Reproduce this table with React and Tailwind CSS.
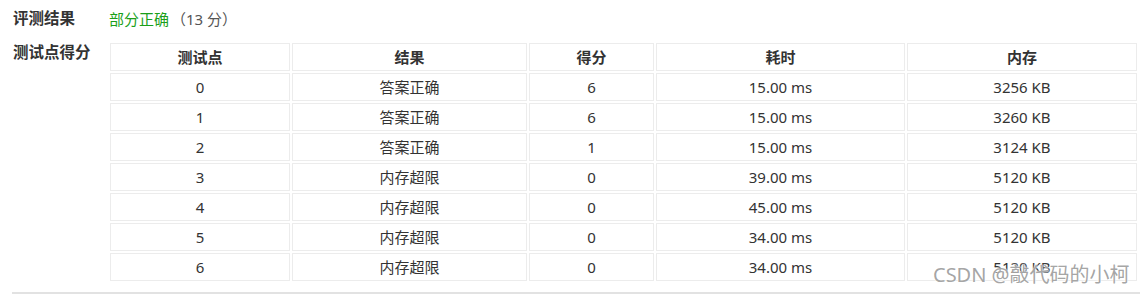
const ROWS = [
  { id: 0, result: '答案正确', score: 6, time: '15.00 ms', mem: '3256 KB' },
  { id: 1, result: '答案正确', score: 6, time: '15.00 ms', mem: '3260 KB' },
  { id: 2, result: '答案正确', score: 1, time: '15.00 ms', mem: '3124 KB' },
  { id: 3, result: '内存超限', score: 0, time: '39.00 ms', mem: '5120 KB' },
  { id: 4, result: '内存超限', score: 0, time: '45.00 ms', mem: '5120 KB' },
  { id: 5, result: '内存超限', score: 0, time: '34.00 ms', mem: '5120 KB' },
  { id: 6, result: '内存超限', score: 0, time: '34.00 ms', mem: '5120 KB' },
]

const COLS = [
  { key: 'id', title: '测试点', w: 'w-[180px]' },
  { key: 'result', title: '结果', w: 'w-[235px]' },
  { key: 'score', title: '得分', w: 'w-[125px]' },
  { key: 'time', title: '耗时', w: 'w-[249px]' },
  { key: 'mem', title: '内存', w: 'w-[230px]' },
]

const FONT = { fontFamily: '"Noto Sans", "Noto Sans CJK SC", sans-serif' }

export default function App() {
  return (
    <div className="relative w-[1140px] h-[294px] bg-white text-[#333] text-[15px] overflow-hidden" style={FONT}>
      <div className="flex items-center h-[38px] pl-[13px]">
        <span className="w-[96px] font-bold text-[15.5px]">评测结果</span>
        <span className="text-[#1a9f1a]">部分正确</span>
        <span className="text-[#555] ml-[2px]">（13 分）</span>
      </div>
      <div className="flex items-start pl-[13px]">
        <span className="w-[95px] font-bold text-[15.5px] mt-[4px] leading-[20px]">测试点得分</span>
        <table className="border-separate border-spacing-[2px] mt-[3px] table-fixed">
          <thead>
            <tr>
              {COLS.map((c) => (
                <th key={c.key} className={`${c.w} h-[28px] p-0 border border-[#ececec] font-bold text-center leading-[26px]`}>
                  {c.title}
                </th>
              ))}
            </tr>
          </thead>
          <tbody>
            {ROWS.map((r) => (
              <tr key={r.id}>
                {COLS.map((c) => (
                  <td key={c.key} className="h-[28px] p-0 border border-[#ececec] text-center leading-[26px]">
                    {r[c.key]}
                  </td>
                ))}
              </tr>
            ))}
          </tbody>
        </table>
      </div>
      <div className="absolute left-[12px] right-0 top-[292px] border-t-2 border-[#e2e2e2]" />
      <div
        className="absolute left-[933px] top-[261px] text-[20px] leading-[28px] text-[#9a9a9a]/90 whitespace-nowrap"
        style={{ ...FONT, textShadow: '0 0 2px #fff, 0 0 2px #fff' }}
      >
        CSDN @敲代码的小柯
      </div>
    </div>
  )
}
